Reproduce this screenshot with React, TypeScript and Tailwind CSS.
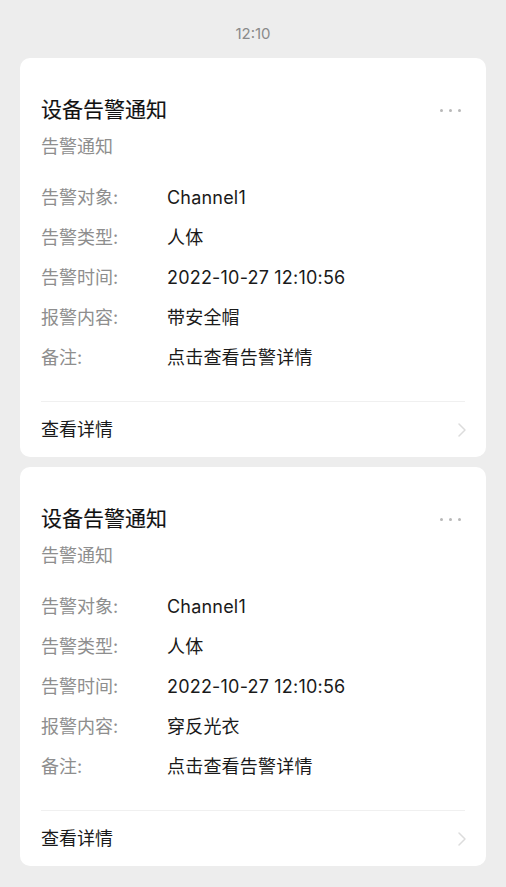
import React from 'react';

const cards = [
  { content: '带安全帽' },
  { content: '穿反光衣' },
];

function AlarmCard({ content }: { content: string }) {
  const rows = [
    ['告警对象:', 'Channel1'],
    ['告警类型:', '人体'],
    ['告警时间:', '2022-10-27 12:10:56'],
    ['报警内容:', content],
    ['备注:', '点击查看告警详情'],
  ];

  return (
    <div className="bg-white rounded-[10px] pt-[38px] px-[21px]">
      <div className="flex items-center justify-between h-[28px]">
        <span className="text-[21px] text-[#111] leading-[28px] [-webkit-text-stroke:0.15px_#111]">设备告警通知</span>
        <div className="flex gap-[6px] pr-[4px]">
          <span className="w-[3px] h-[3px] rounded-full bg-[#b8b8b8]" />
          <span className="w-[3px] h-[3px] rounded-full bg-[#b8b8b8]" />
          <span className="w-[3px] h-[3px] rounded-full bg-[#b8b8b8]" />
        </div>
      </div>
      <div className="mt-[10px] text-[18px] leading-[26px] text-[#8e8e8e]">告警通知</div>

      <div className="mt-[17px]">
        {rows.map(([label, value]) => (
          <div key={label} className="flex h-[40px] items-center text-[18px]">
            <span className="w-[126px] shrink-0 text-[#8e8e8e]">{label}</span>
            <span className="text-[#1a1a1a] tracking-[0.2px]">{value}</span>
          </div>
        ))}
      </div>

      <div className="mt-[24px] h-px bg-[#f0f0f0]" />

      <div className="h-[55px] flex items-center justify-between">
        <span className="text-[18px] text-[#1a1a1a]">查看详情</span>
        <svg width="10" height="16" viewBox="0 0 10 16" className="mr-[-2px]">
          <path d="M2 2 L8 8 L2 14" fill="none" stroke="#dcdcdc" strokeWidth="1.5" strokeLinecap="round" strokeLinejoin="round" />
        </svg>
      </div>
    </div>
  );
}

export default function App() {
  return (
    <div
      className="min-h-screen bg-[#ededed] pt-[24px] px-[20px] pb-[21px]"
      style={{ fontFamily: 'Inter, "Noto Sans CJK SC", "Noto Sans", sans-serif' }}
    >
      <div className="text-center text-[15px] leading-[20px] text-[#8a8a8a] mb-[14px]">12:10</div>
      <div className="flex flex-col gap-[10px]">
        {cards.map((c, i) => (
          <AlarmCard key={i} content={c.content} />
        ))}
      </div>
    </div>
  );
}
